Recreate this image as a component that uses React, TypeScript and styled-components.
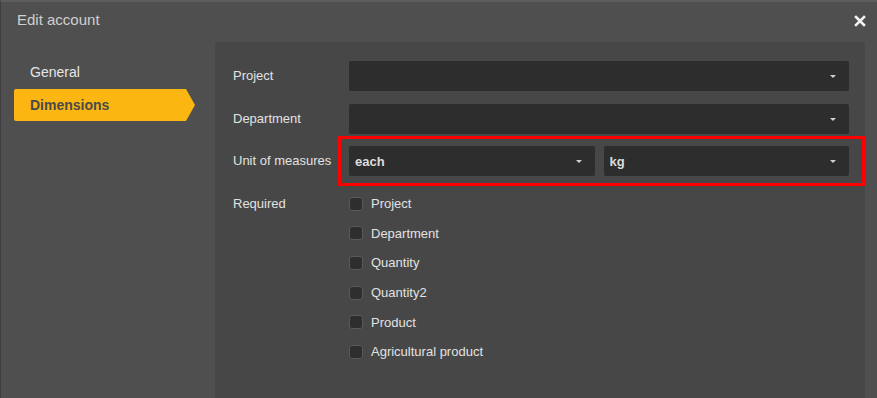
import React from "react";
import styled, {createGlobalStyle} from "styled-components";

const GlobalStyle = createGlobalStyle`
  html, body {
    margin: 0;
    padding: 0;
    background: #4f4f4f;
    font-family: "Liberation Sans", Arial, sans-serif;
  }
`;

const requiredFields = [
    "Project",
    "Department",
    "Quantity",
    "Quantity2",
    "Product",
    "Agricultural product",
];

const App = () => {
    return (
        <>
            <GlobalStyle/>
            <Dialog>
                <Header>
                    <Title>Edit account</Title>
                    <CloseButton aria-label="Close">
                        <svg width="12" height="12" viewBox="0 0 12 12">
                            <path d="M2 2 L10 10 M10 2 L2 10" stroke="#f2f2f2" strokeWidth="2.6" strokeLinecap="square"/>
                        </svg>
                    </CloseButton>
                </Header>
                <Body>
                    <Sidebar>
                        <Tab>General</Tab>
                        <Tab active>Dimensions</Tab>
                    </Sidebar>
                    <Panel>
                        <FormRow>
                            <Label>Project</Label>
                            <Select><Value/><Caret/></Select>
                        </FormRow>
                        <FormRow>
                            <Label>Department</Label>
                            <Select><Value/><Caret/></Select>
                        </FormRow>
                        <UnitRow>
                            <Label>Unit of measures</Label>
                            <Highlight>
                                <Select><Value>each</Value><Caret/></Select>
                                <Select><Value>kg</Value><Caret/></Select>
                            </Highlight>
                        </UnitRow>
                        <RequiredRow>
                            <Label>Required</Label>
                            <CheckList>
                                {requiredFields.map((name) => (
                                    <CheckItem key={name}>
                                        <Box/>
                                        <span>{name}</span>
                                    </CheckItem>
                                ))}
                            </CheckList>
                        </RequiredRow>
                    </Panel>
                </Body>
            </Dialog>
        </>
    );
};

export default App;

const Dialog = styled.div`
  width: 877px;
  height: 398px;
  box-sizing: border-box;
  background: #4f4f4f;
  border-top: 2px solid #5d5d5d;
  border-left: 1px solid #3f3f3f;
  display: flex;
  flex-direction: column;
  overflow: hidden;
`;

const Header = styled.div`
  height: 40px;
  display: flex;
  align-items: center;
  justify-content: space-between;
  padding: 0 10px 0 16px;
`;

const Title = styled.div`
  font-size: 15px;
  color: #cfcfcf;
  margin-top: -5px;
`;

const CloseButton = styled.div`
  width: 14px;
  height: 14px;
  display: flex;
  align-items: center;
  justify-content: center;
  margin-top: -3px;
`;

const Body = styled.div`
  flex: 1;
  display: flex;
  padding-right: 12px;
`;

const Sidebar = styled.div`
  width: 214px;
  padding: 15px 0 0 13px;
  box-sizing: border-box;
  display: flex;
  flex-direction: column;
`;

const Tab = styled.div<{ active?: boolean }>`
  height: 32px;
  width: 172px;
  display: flex;
  align-items: center;
  padding-left: 16px;
  box-sizing: border-box;
  font-size: 14px;
  font-weight: ${(p) => (p.active ? "bold" : "normal")};
  color: ${(p) => (p.active ? "#4a4a4a" : "#e6e6e6")};
  background: ${(p) => (p.active ? "#fbb612" : "transparent")};
  border-radius: 2px 0 0 2px;
  position: relative;
  margin-top: ${(p) => (p.active ? "1px" : "-1px")};

  &::after {
    content: "";
    display: ${(p) => (p.active ? "block" : "none")};
    position: absolute;
    right: -9px;
    top: 0;
    border-top: 16px solid transparent;
    border-bottom: 16px solid transparent;
    border-left: 9px solid #fbb612;
  }
`;

const Panel = styled.div`
  flex: 1;
  background: #474747;
  padding: 19px 16px 0 18px;
  display: flex;
  flex-direction: column;
  gap: 13px;
`;

const FormRow = styled.div`
  display: flex;
  align-items: center;
`;

const UnitRow = styled(FormRow)`
  margin-top: -1px;
`;

const Label = styled.div`
  width: 116px;
  flex-shrink: 0;
  font-size: 13px;
  color: #e2e2e2;
  margin-top: -1px;
`;

const Select = styled.div`
  flex: 1;
  height: 30px;
  background: #2d2d2d;
  border-radius: 2px;
  display: flex;
  align-items: center;
  padding: 0 12px 0 6px;
  box-sizing: border-box;
`;

const Value = styled.div`
  flex: 1;
  font-size: 13px;
  font-weight: bold;
  color: #dcdcdc;
`;

const Caret = styled.div`
  width: 0;
  height: 0;
  border-left: 3px solid transparent;
  border-right: 3px solid transparent;
  border-top: 3px solid #d0d0d0;
  margin-right: 1px;
`;

const Highlight = styled.div`
  flex: 1;
  display: flex;
  gap: 9px;
  position: relative;

  &::after {
    content: "";
    position: absolute;
    left: -11px;
    right: -16px;
    top: -10px;
    bottom: -10px;
    border: 3px solid #ff0000;
    pointer-events: none;
  }
`;

const RequiredRow = styled.div`
  display: flex;
  align-items: flex-start;
  margin-top: 7px;

  ${Label} {
    padding-top: 1px;
  }
`;

const CheckList = styled.div`
  display: flex;
  flex-direction: column;
  gap: 14.7px;
`;

const CheckItem = styled.label`
  display: flex;
  align-items: center;
  gap: 8px;
  font-size: 13px;
  color: #e2e2e2;
  height: 15px;
`;

const Box = styled.span`
  width: 12px;
  height: 12px;
  background: #2e2e2e;
  border: 1px solid #595959;
  border-radius: 3px;
`;
